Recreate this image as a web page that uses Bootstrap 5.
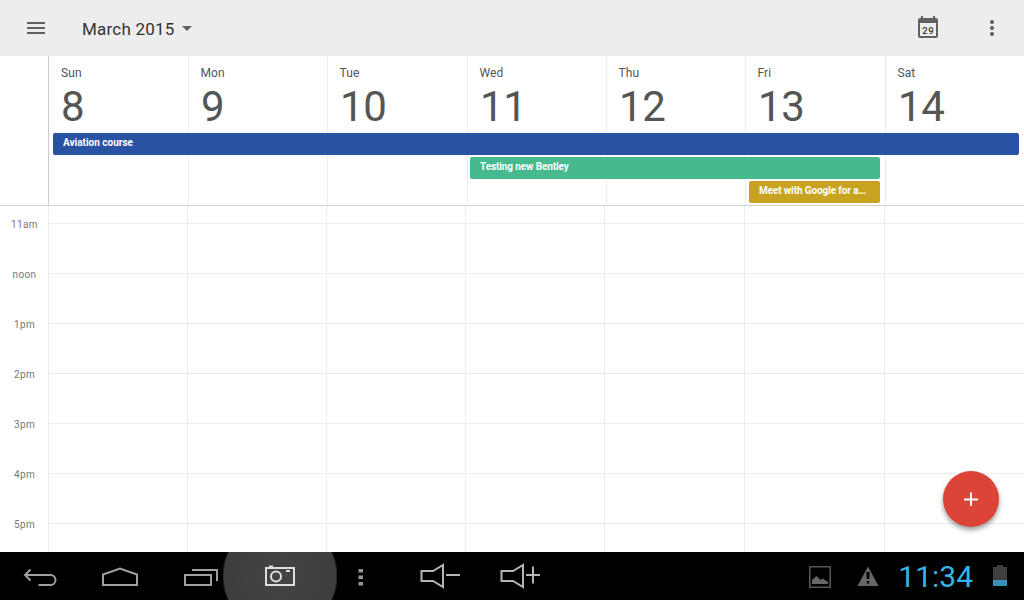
<!DOCTYPE html>
<html lang="en">
<head>
<meta charset="utf-8">
<meta name="viewport" content="width=device-width, initial-scale=1">
<title>Calendar – March 2015</title>
<link href="https://cdn.jsdelivr.net/npm/bootstrap@5.3.0/dist/css/bootstrap.min.css" rel="stylesheet">
<style>
  body { font-family: Roboto, "Liberation Sans", sans-serif; height: 600px; background: #fff; color: #555; line-height: 1; }
  svg { display: block; }
  .app-bar { height: 56px; background: #ededed; padding: 0 25px 0 26px; }
  .month-btn { font-size: 17px; letter-spacing: .22px; color: #333; margin-left: 36px; line-height: 20px; padding-top: 2px; }
  .month-btn svg { margin-left: 7px; margin-top: -2px; }
  .week-head { height: 150px; display: grid; grid-template-columns: 48px 140px 139px 140px 139px 139px 140px 139px; grid-template-rows: 75px 22px 22px 22px 0; row-gap: 2px; border-bottom: 1px solid #d2d2d2; }
  .day-col { grid-row: 1 / -1; border-left: 1px solid #ececec; padding: 10px 0 0 12px; margin-bottom: 0; height: 149px; }
  .day-col.first { border-color: #ccc; }
  .day-name { font-size: 12px; line-height: 14px; letter-spacing: .1px; margin-left: -.5px; }
  .first .day-name { margin-left: 0; }
  .day-num { font-size: 42px; line-height: 42px; margin-top: 6px; margin-left: 0; letter-spacing: -.4px; }
  .event { font-size: 10px; font-weight: 700; line-height: 18px; color: #fff; border-radius: 2px; padding: 1px 10px; height: 22px; }
  .event.tight { letter-spacing: -.11px; }
  .hours { height: 346px; overflow: hidden; }
  .hour-row { display: grid; grid-template-columns: 48px 139px 139px 139px 139px 140px 140px 140px; height: 50px; }
  .hour-row.lead-in { height: 17px; }
  .slot { border-left: 1px solid #ececec; border-top: 1px solid #ececec; }
  .lead-in .slot { border-top: 0; }
  .hour-name { font-size: 10px; line-height: 12px; letter-spacing: .4px; color: #777; text-align: center; margin-top: -4px; padding-left: 1px; }
  .fab { width: 56px; height: 56px; right: 25px; bottom: 73.5px; background: #db4437; box-shadow: 0 3px 5px rgba(0,0,0,.4); }
  .nav-keys { height: 48px; background: #000; }
  .key { width: 80px; height: 48px; flex: none; }
  .key.pressed { width: 114px; margin: 0 -17px; background: radial-gradient(circle 58px at 57px 24px, #444 0, #3c3e3c 56px, transparent 58px); }
  .clock { font-size: 30px; font-weight: 400; color: #33b5e5; line-height: 48px; padding-top: 1px; }
</style>
</head>
<body class="d-flex flex-column overflow-hidden position-relative">
<header class="app-bar d-flex align-items-center flex-shrink-0">
  <svg width="20" height="14" fill="#616161"><path d="M1 1h18v2H1zM1 6h18v2H1zM1 11h18v2H1z"/></svg>
  <div class="month-btn d-flex align-items-center">March 2015<svg width="10" height="5" fill="#616161"><path d="M0 0h10L5 5z"/></svg></div>
  <div class="ms-auto d-flex align-items-center">
    <svg width="20" height="24" viewBox="0 0 20 24"><path fill="#616161" d="M3 0h2v2h10V0h2v2h1a2 2 0 0 1 2 2v16a2 2 0 0 1-2 2H2a2 2 0 0 1-2-2V4a2 2 0 0 1 2-2h1zM2 7v13h16V7z"/><text x="10.200" y="18" text-anchor="middle" font-size="9.500" font-weight="500" letter-spacing=".5" fill="#333">29</text></svg>
    <svg class="ms-5" width="13" height="20" fill="#616161"><circle cx="6" cy="4" r="2.1"/><circle cx="6" cy="10" r="2.1"/><circle cx="6" cy="16" r="2.1"/></svg>
  </div>
</header>

<section class="week-head flex-shrink-0">
  <div class="day-col first" style="grid-column:2"><div class="day-name">Sun</div><div class="day-num">8</div></div>
  <div class="day-col" style="grid-column:3"><div class="day-name">Mon</div><div class="day-num">9</div></div>
  <div class="day-col" style="grid-column:4"><div class="day-name">Tue</div><div class="day-num">10</div></div>
  <div class="day-col" style="grid-column:5"><div class="day-name">Wed</div><div class="day-num">11</div></div>
  <div class="day-col" style="grid-column:6"><div class="day-name">Thu</div><div class="day-num">12</div></div>
  <div class="day-col" style="grid-column:7"><div class="day-name">Fri</div><div class="day-num">13</div></div>
  <div class="day-col" style="grid-column:8"><div class="day-name">Sat</div><div class="day-num">14</div></div>
  <div class="event text-nowrap" style="grid-area:2/2/3/9;margin:0 5px;background:#2952a3">Aviation course</div>
  <div class="event tight text-nowrap" style="grid-area:3/5/4/8;margin:0 5px 0 3px;background:#47b98e">Testing new Bentley</div>
  <div class="event tight text-nowrap" style="grid-area:4/7/5/8;margin:0 5px 0 4px;background:#c7a321">Meet with Google for a…</div>
</section>

<main class="hours flex-shrink-0">
  <div class="hour-row lead-in"><div></div><div class="slot"></div><div class="slot"></div><div class="slot"></div><div class="slot"></div><div class="slot"></div><div class="slot"></div><div class="slot"></div></div>
  <div class="hour-row"><div class="hour-name">11am</div><div class="slot"></div><div class="slot"></div><div class="slot"></div><div class="slot"></div><div class="slot"></div><div class="slot"></div><div class="slot"></div></div>
  <div class="hour-row"><div class="hour-name">noon</div><div class="slot"></div><div class="slot"></div><div class="slot"></div><div class="slot"></div><div class="slot"></div><div class="slot"></div><div class="slot"></div></div>
  <div class="hour-row"><div class="hour-name">1pm</div><div class="slot"></div><div class="slot"></div><div class="slot"></div><div class="slot"></div><div class="slot"></div><div class="slot"></div><div class="slot"></div></div>
  <div class="hour-row"><div class="hour-name">2pm</div><div class="slot"></div><div class="slot"></div><div class="slot"></div><div class="slot"></div><div class="slot"></div><div class="slot"></div><div class="slot"></div></div>
  <div class="hour-row"><div class="hour-name">3pm</div><div class="slot"></div><div class="slot"></div><div class="slot"></div><div class="slot"></div><div class="slot"></div><div class="slot"></div><div class="slot"></div></div>
  <div class="hour-row"><div class="hour-name">4pm</div><div class="slot"></div><div class="slot"></div><div class="slot"></div><div class="slot"></div><div class="slot"></div><div class="slot"></div><div class="slot"></div></div>
  <div class="hour-row"><div class="hour-name">5pm</div><div class="slot"></div><div class="slot"></div><div class="slot"></div><div class="slot"></div><div class="slot"></div><div class="slot"></div><div class="slot"></div></div>
</main>

<div class="fab position-absolute rounded-circle d-flex align-items-center justify-content-center">
  <svg width="14" height="14" fill="#fff"><path d="M6 .5h2v6h6v2H8v6H6v-6H0v-2h6z"/></svg>
</div>

<footer class="nav-keys d-flex flex-shrink-0">
  <div class="key"><svg width="80" height="48" fill="none" stroke="#a0a0a0" stroke-width="2"><path d="M25 23h25.500a5 5 0 0 1 0 10H38.500M30.500 17.500l-5.500 5.500 5.500 5.500"/></svg></div>
  <div class="key"><svg width="80" height="48" fill="none" stroke="#a0a0a0" stroke-width="2"><path d="M23 33V22.500L40 16.500l17 6V33z"/></svg></div>
  <div class="key"><svg width="80" height="48" fill="none" stroke="#a0a0a0" stroke-width="2"><path d="M25 23h26v10H25zM32 18h25v11"/></svg></div>
  <div class="key pressed"><svg width="114" height="48" fill="none" stroke="#dedede" stroke-width="2"><path d="M43 16h28v17H43z"/><circle cx="53" cy="24.500" r="5"/><path d="M46 14.500h4M63 19h4"/></svg></div>
  <div class="key"><svg width="80" height="48" fill="#969696"><path d="M38.500 17h4.500v3.500h-4.500zM38.500 23.500h4.500v3.500h-4.500zM38.500 30h4.500v3.500h-4.500z"/></svg></div>
  <div class="key"><svg width="80" height="48" fill="none" stroke="#b4b4b4" stroke-width="2"><path d="M21.500 19h11.500L43 13v22L33 29H21.500zM46 23h14"/></svg></div>
  <div class="key"><svg width="80" height="48" fill="none" stroke="#b4b4b4" stroke-width="2"><path d="M21.500 19h11.500L43 13v22L33 29H21.500zM46 23h14M53 14.500v17"/></svg></div>
  <div class="ms-auto d-flex align-items-start">
    <svg width="89" height="48"><path fill="none" stroke="#555" stroke-width="1.600" d="M.8 14.800h20.400v20.400H.8z"/><path fill="#666" d="M3 32v-4l4.500-4 4 4 2-1.500 5.500 3.500v2z"/><path fill="#666" fill-rule="evenodd" d="M59 14.500L69.500 34h-21zM57.300 20l.5 7h2.400l.5-7zM57.800 29v2.500h2.400V29z"/></svg>
    <div class="clock">11:34</div>
    <svg style="margin:13px 17px 0 20px" width="14" height="22"><path fill="#3f3f3f" d="M4 0h6v2h4v13H0V2h4z"/><path fill="#3592b8" d="M0 15h14v6H0z"/></svg>
  </div>
</footer>
<script src="https://cdn.jsdelivr.net/npm/bootstrap@5.3.0/dist/js/bootstrap.bundle.min.js"></script>
</body>
</html>
